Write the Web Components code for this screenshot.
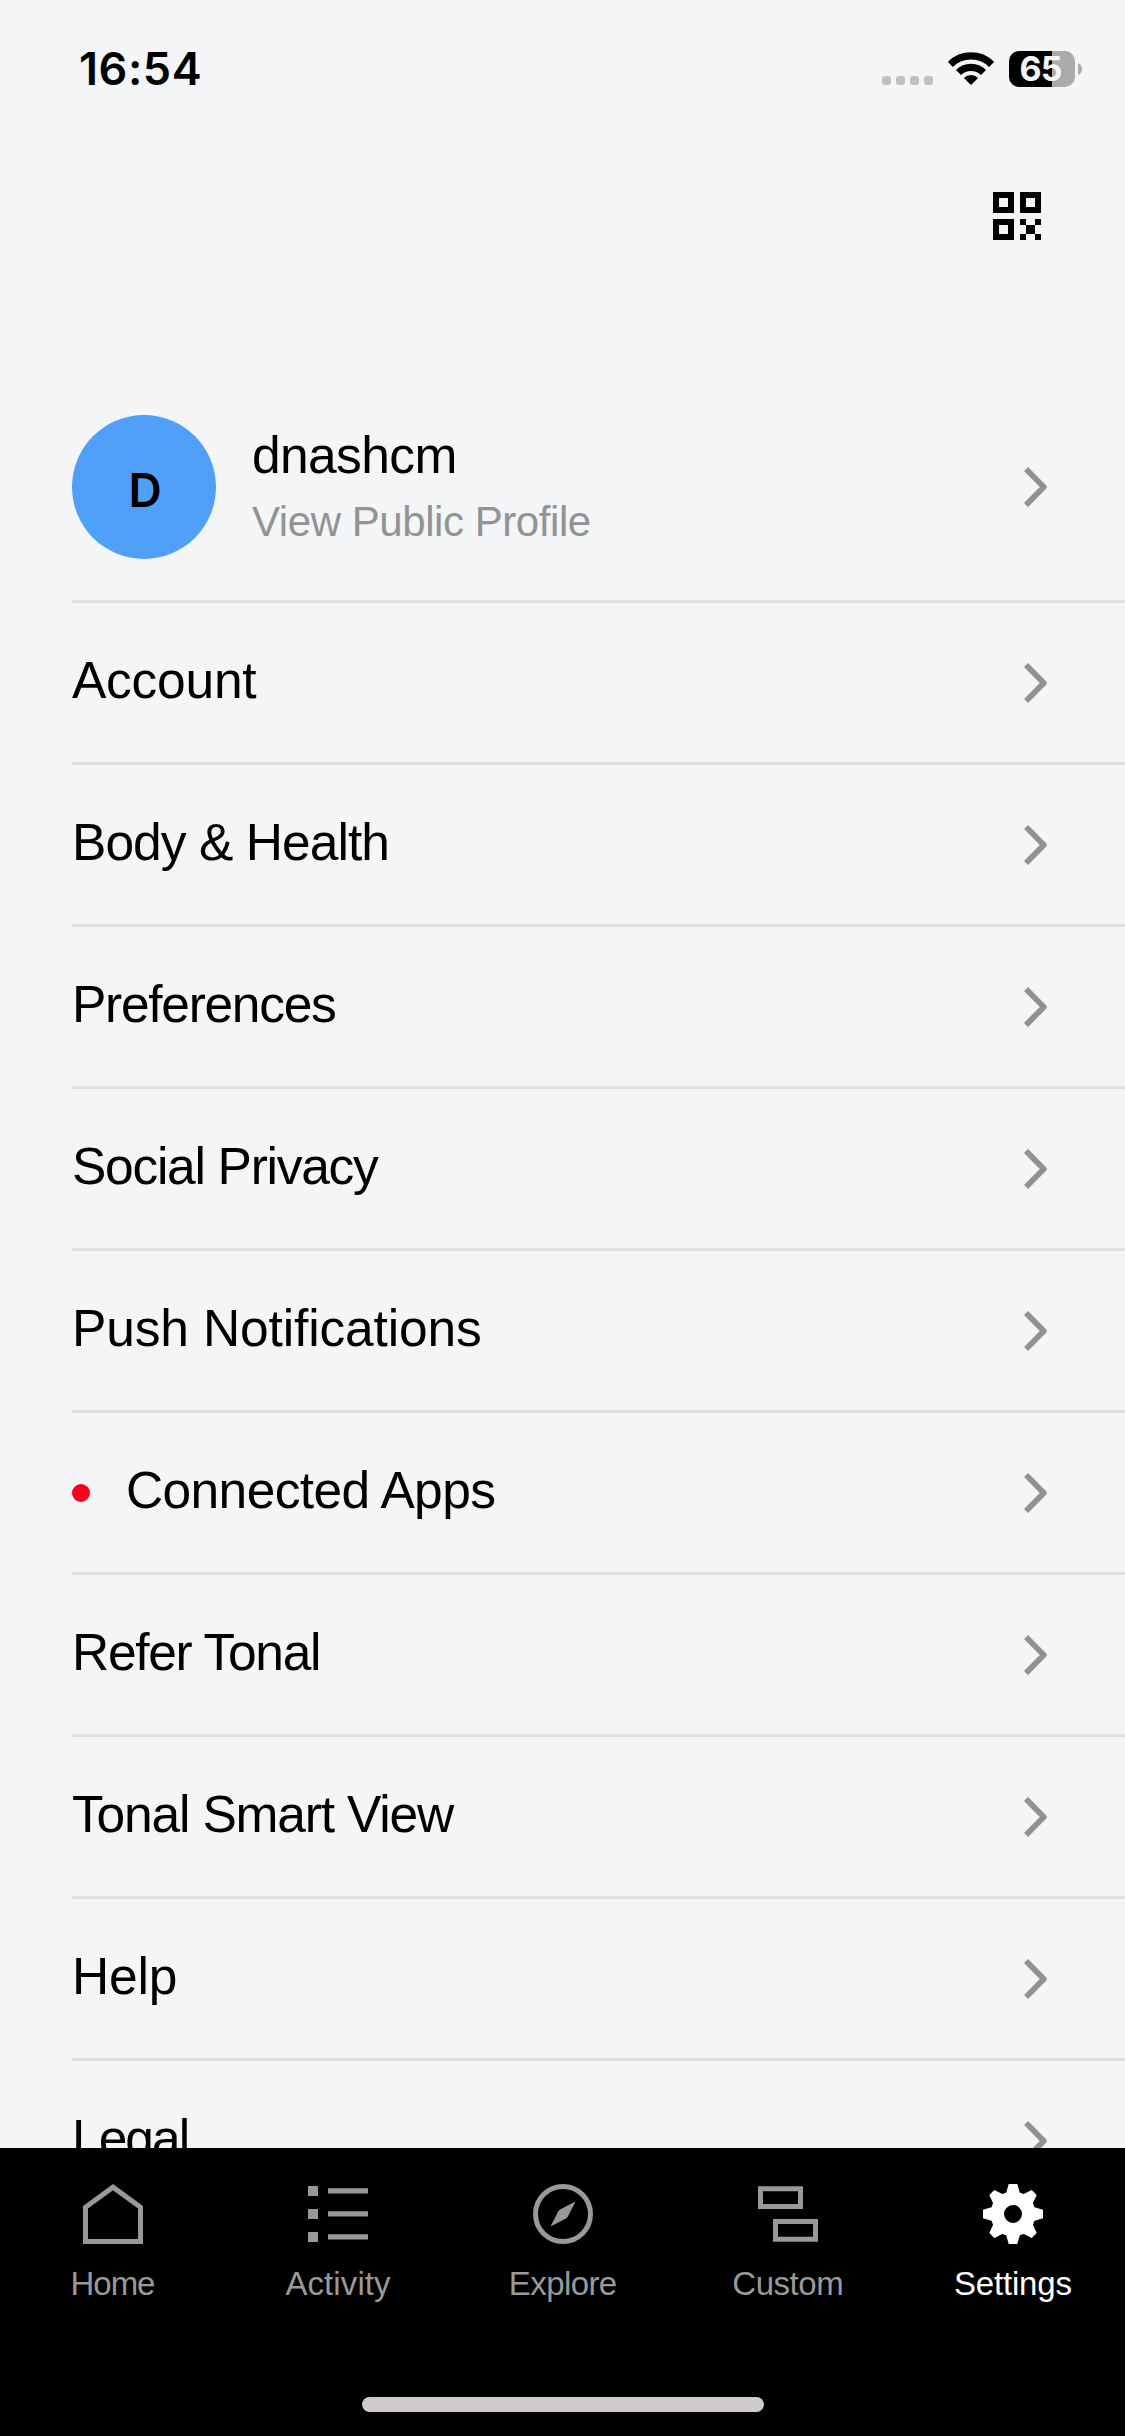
<!DOCTYPE html>
<html lang="en">
<head>
<meta charset="utf-8">
<title>Settings</title>
<style>
html,body{margin:0;padding:0}
body{width:1125px;height:2436px;overflow:hidden;background:#f3f5f7;font-family:"Liberation Sans",Arial,sans-serif;color:#000}
</style>
</head>
<body>
<app-screen>
  <status-bar slot="top"><ink-text slot="time" ink="118.7">16:54</ink-text><ink-text slot="level" ink="41.4">65</ink-text></status-bar>
  <app-toolbar slot="top"></app-toolbar>
  <profile-row>
    <span slot="initial">D</span>
    <ink-text slot="name" ink="200.4">dnashcm</ink-text>
    <ink-text slot="sub" ink="337.8">View Public Profile</ink-text>
  </profile-row>
  <settings-row><ink-text ink="184.3">Account</ink-text></settings-row>
  <settings-row><ink-text ink="311.3">Body &amp; Health</ink-text></settings-row>
  <settings-row><ink-text ink="259">Preferences</ink-text></settings-row>
  <settings-row><ink-text ink="305">Social Privacy</ink-text></settings-row>
  <settings-row><ink-text ink="404">Push Notifications</ink-text></settings-row>
  <settings-row alert><ink-text ink="369">Connected Apps</ink-text></settings-row>
  <settings-row><ink-text ink="243">Refer Tonal</ink-text></settings-row>
  <settings-row><ink-text ink="382">Tonal Smart View</ink-text></settings-row>
  <settings-row><ink-text ink="99.7">Help</ink-text></settings-row>
  <settings-row><ink-text ink="110.7">Legal</ink-text></settings-row>
  <tab-bar slot="bottom">
    <tab-item>
      <svg slot="icon" width="60" height="60" viewBox="0 0 60 60" fill="none" stroke="currentColor" stroke-width="5"><path d="M2.5 23.2 30 3.2 57.500 23.200V57.500H2.500Z"/></svg>
      <ink-text ink="81.6">Home</ink-text>
    </tab-item>
    <tab-item>
      <svg slot="icon" width="60" height="60" viewBox="0 0 60 60" fill="currentColor"><path d="M0 2h10v10H0zM0 25h10v10H0zM0 48h10v10H0zM20 4.200h40v5.300H20zM20 27.200h40v5.300H20zM20 50.200h40v5.300H20z"/></svg>
      <ink-text ink="105.7">Activity</ink-text>
    </tab-item>
    <tab-item>
      <svg slot="icon" width="60" height="60" viewBox="0 0 60 60"><circle cx="30" cy="30" r="27.500" fill="none" stroke="currentColor" stroke-width="5"/><path fill="currentColor" d="M42.500 17.500 35 32.200Q34.300 33.800 32.500 34.800L17.500 42.500 25.200 27.600Q26 26 27.600 25.200Z"/></svg>
      <ink-text ink="105">Explore</ink-text>
    </tab-item>
    <tab-item>
      <svg slot="icon" width="60" height="60" viewBox="0 0 60 60" fill="none" stroke="currentColor" stroke-width="5"><path d="M2.500 4.800h40v17.700h-40zM17.500 37.500h40v17.700h-40z"/></svg>
      <ink-text ink="109">Custom</ink-text>
    </tab-item>
    <tab-item active>
      <svg slot="icon" width="60" height="60" viewBox="-30 -30 60 60" fill="currentColor" fill-rule="evenodd"><path d="M-4.300-30H4.300L6.700-21.500Q8-20.600 10.700-20L18.700-24 23.700-19 20-11Q20.800-8 21.500-6.700L30-4.300V4.300L21.500 6.700Q20.800 8 20 11L23.700 19 18.700 24 10.700 20Q8 20.600 6.700 21.500L4.300 30H-4.300L-6.700 21.500Q-8 20.600-10.700 20L-18.700 24-23.700 19-20 11Q-20.800 8-21.500 6.700L-30 4.300V-4.300L-21.500-6.700Q-20.800-8-20-11L-23.700-19-18.700-24-10.700-20Q-8-20.600-6.700-21.500ZM9 0A9 9 0 1 0-9 0 9 9 0 1 0 9 0Z"/></svg>
      <ink-text ink="116.4">Settings</ink-text>
    </tab-item>
  </tab-bar>
</app-screen>

<script>
function element(name, html, extra) {
  const tpl = document.createElement('template');
  tpl.innerHTML = html;
  customElements.define(name, class extends HTMLElement {
    constructor() {
      super();
      this.attachShadow({ mode: 'open' }).appendChild(tpl.content.cloneNode(true));
    }
    connectedCallback() { if (extra) extra(this); }
  });
}

element('app-screen', `
<style>
:host{display:flex;flex-direction:column;width:1125px;height:2436px;background:#f3f5f7}
.list{flex:1;min-height:0;overflow:hidden;display:flex;flex-direction:column}
::slotted(*){flex:none}
</style>
<slot name="top"></slot><div class="list"><slot></slot></div><slot name="bottom"></slot>`);

element('status-bar', `
<style>
:host{display:flex;justify-content:space-between;align-items:center;height:138px;box-sizing:border-box;padding:0 43px 0 79px;font-family:Inter,sans-serif}
.time{font-size:45px;font-weight:600;line-height:54px}
.right{display:flex;align-items:center}
.dots{display:flex;gap:5px;margin:23px 15px 0 0}
.dots i{width:9px;height:9px;border-radius:3px;background:#bfc0c2}
.wifi{margin-right:15px}
.battery{width:66px;height:36px;border-radius:10px;background:linear-gradient(90deg,#000 43px,#ababac 43px);display:flex;align-items:center;justify-content:center;color:#f3f5f7;font-size:34px;font-weight:700;line-height:36px;box-sizing:border-box;padding-right:2px}
.nub{margin-left:3px}
</style>
<div class="time"><slot name="time"></slot></div>
<div class="right">
  <div class="dots"><i></i><i></i><i></i><i></i></div>
  <svg class="wifi" width="46" height="34" viewBox="-23 -33 46 34">
    <path d="M-20.600-20.600A29.200 29.200 0 0 1 20.600-20.600M-12.500-12.500A17.700 17.700 0 0 1 12.500-12.500" fill="none" stroke="#000" stroke-width="7.200"/>
    <path d="M0 0-7.100-7.100A10 10 0 0 1 7.100-7.100Z"/>
  </svg>
  <div class="battery"><slot name="level"></slot></div>
  <svg class="nub" width="4" height="12" viewBox="0 0 4 12"><path fill="#ababac" d="M0 0Q4 2 4 6T0 12Z"/></svg>
</div>`);

element('app-toolbar', `
<style>
:host{display:flex;justify-content:flex-end;height:236px;box-sizing:border-box;padding:54px 84px 0 0}
</style>
<svg width="48" height="48" viewBox="0 0 48 48"><path fill-rule="evenodd" d="M0 0h21v21H0zM6 6v9h9V6zM27 0h21v21H27zM33 6v9h9V6zM0 27h21v21H0zM6 33v9h9v-9zM27 27h6v6h9v-6h6v6h-6v9h6v6h-6v-6h-9v6h-6v-6h6v-9h-6z"/></svg>`);

element('chevron-icon', `
<style>:host{display:block;width:24px;height:40px;flex:none}svg{display:block}</style>
<svg width="24" height="40" viewBox="0 0 24 40"><path d="M2 2 19.800 20 2 38" fill="none" stroke="#909193" stroke-width="5.800" stroke-linejoin="round"/></svg>`);

element('profile-row', `
<style>
:host{display:flex;align-items:center;height:229px;box-sizing:border-box;border-bottom:3px solid #dfe1e3;margin-left:72px;padding-right:77px}
.avatar{width:144px;height:144px;border-radius:50%;background:#509ff9;display:flex;align-items:center;justify-content:center;font:600 46px/56px Inter,sans-serif;padding-top:5px;box-sizing:border-box;padding-left:2px}
.text{flex:1;display:flex;flex-direction:column;gap:10px;padding:0 0 0 36px}
.name{font-size:51.500px;line-height:60px}
.sub{font-size:42px;line-height:54px;color:#929395}
</style>
<div class="avatar"><slot name="initial"></slot></div>
<div class="text"><div class="name"><slot name="name"></slot></div><div class="sub"><slot name="sub"></slot></div></div>
<chevron-icon></chevron-icon>`);

element('settings-row', `
<style>
:host{display:flex;align-items:center;height:162px;box-sizing:border-box;border-bottom:3px solid #dfe1e3;margin-left:72px;padding-right:77px}
.dot{display:none;width:18px;height:18px;border-radius:50%;background:#f90020;margin-right:36px}
:host([alert]) .dot{display:block}
.label{flex:1;font-size:51.500px;line-height:60px;padding-bottom:5px}
</style>
<i class="dot"></i><div class="label"><slot></slot></div><chevron-icon></chevron-icon>`);

element('tab-bar', `
<style>
:host{display:flex;flex-direction:column;justify-content:space-between;align-items:center;height:288px;box-sizing:border-box;padding:36px 0 24px;background:#000}
.tabs{display:flex;width:100%}
.home{width:402px;height:15px;border-radius:8px;background:#cfcbcd}
</style>
<div class="tabs"><slot></slot></div><div class="home"></div>`);

element('tab-item', `
<style>
:host{flex:1;display:flex;flex-direction:column;align-items:center;gap:21px;color:#999}
:host([active]){color:#fff}
.icon{width:60px;height:60px;margin-left:1px}
::slotted(svg){display:block}
.label{font-size:33px;line-height:38px;padding-left:1px}
</style>
<div class="icon"><slot name="icon"></slot></div><div class="label"><slot></slot></div>`);

/* Text whose tracking is set so that its inked width equals the "ink" attribute. */
element('ink-text', `
<style>:host{display:block;width:max-content;white-space:nowrap;font-variant-ligatures:none}</style><slot></slot>`, el => {
  const text = el.textContent.trim();
  const cs = getComputedStyle(el);
  const ctx = document.createElement('canvas').getContext('2d');
  ctx.font = cs.fontWeight + ' ' + cs.fontSize + ' ' + cs.fontFamily;
  const m = ctx.measureText(text);
  const ink = m.actualBoundingBoxLeft + m.actualBoundingBoxRight;
  const gap = (parseFloat(el.getAttribute('ink')) - ink) / (text.length - 1);
  el.style.letterSpacing = gap.toFixed(3) + 'px';
  el.style.marginRight = (-gap).toFixed(3) + 'px';
});
</script>
</body>
</html>
